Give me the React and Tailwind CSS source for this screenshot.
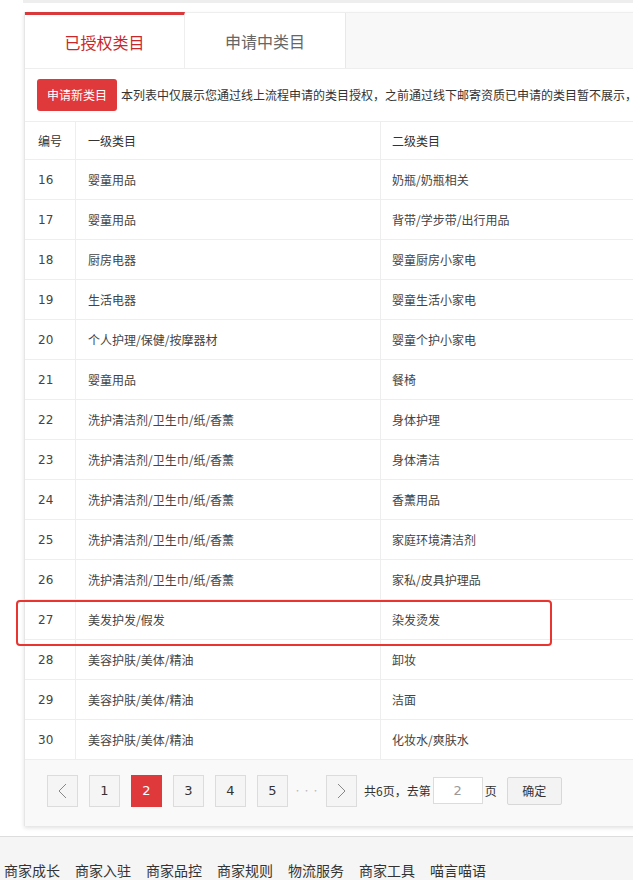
import React from 'react';

const rows = [
  [16, '婴童用品', '奶瓶/奶瓶相关'],
  [17, '婴童用品', '背带/学步带/出行用品'],
  [18, '厨房电器', '婴童厨房小家电'],
  [19, '生活电器', '婴童生活小家电'],
  [20, '个人护理/保健/按摩器材', '婴童个护小家电'],
  [21, '婴童用品', '餐椅'],
  [22, '洗护清洁剂/卫生巾/纸/香薰', '身体护理'],
  [23, '洗护清洁剂/卫生巾/纸/香薰', '身体清洁'],
  [24, '洗护清洁剂/卫生巾/纸/香薰', '香薰用品'],
  [25, '洗护清洁剂/卫生巾/纸/香薰', '家庭环境清洁剂'],
  [26, '洗护清洁剂/卫生巾/纸/香薰', '家私/皮具护理品'],
  [27, '美发护发/假发', '染发烫发'],
  [28, '美容护肤/美体/精油', '卸妆'],
  [29, '美容护肤/美体/精油', '洁面'],
  [30, '美容护肤/美体/精油', '化妆水/爽肤水'],
];

const footerLinks = ['商家成长', '商家入驻', '商家品控', '商家规则', '物流服务', '商家工具', '喵言喵语'];

const cjk = { fontFamily: '"Noto Sans CJK SC", "Liberation Sans", sans-serif' };
const num = { fontFamily: '"DejaVu Sans", "Noto Sans CJK SC", sans-serif' };

const PageBtn = ({ children, active }) => (
  <div
    className={`w-[31px] h-[32px] flex items-center justify-center text-[13px] border ${
      active ? 'bg-[#e0393b] border-[#e0393b] text-white' : 'bg-[#f5f5f5] border-[#dcdcdc] text-[#333]'
    }`}
    style={num}
  >
    {children}
  </div>
);

export default function App() {
  return (
    <div className="relative w-[633px] h-[880px] overflow-hidden bg-white" style={cjk}>
      <div className="h-[3px] ml-[23px] bg-[#eeeeee]" />

      <div className="ml-[24px] mt-[9px] w-[820px] bg-white border-l border-[#e6e6e6] shadow-[0_2px_4px_rgba(0,0,0,0.12)]">
        {/* tabs */}
        <div className="flex h-[56px] bg-[#f8f8f8] border-t border-[#eeeeee]">
          <div className="w-[160px] bg-white border-t-[3px] border-[#d9393b] border-r border-r-[#eeeeee] flex items-center justify-center text-[16px] text-[#c8282c] -mt-px">
            已授权类目
          </div>
          <div className="w-[161px] bg-white border-r border-[#e8e8e8] flex items-center justify-center text-[16px] text-[#666]">
            申请中类目
          </div>
          <div className="flex-1" />
        </div>

        {/* notice */}
        <div className="flex items-center h-[53px] pl-[12px] border-t border-[#eeeeee]">
          <div className="h-[32px] px-[10px] bg-[#e0393b] rounded-[3px] text-white text-[12px] flex items-center">
            申请新类目
          </div>
          <div className="ml-[4px] text-[12px] text-[#333] whitespace-nowrap">
            本列表中仅展示您通过线上流程申请的类目授权，之前通过线下邮寄资质已申请的类目暂不展示，
          </div>
        </div>

        {/* table */}
        <div className="border-t border-[#eeeeee] text-[12px]">
          <div className="flex h-[38px] items-center text-[#333] border-b border-[#eeeeee]">
            <div className="w-[51px] h-full flex items-center pl-[13px] border-r border-[#eeeeee]">编号</div>
            <div className="w-[305px] h-full flex items-center pl-[12px] border-r border-[#eeeeee]">一级类目</div>
            <div className="flex-1 h-full flex items-center pl-[11px]">二级类目</div>
          </div>
          {rows.map(([n, a, b]) => (
            <div key={n} className="flex h-[40px] items-center text-[#444] border-b border-[#eeeeee]">
              <div className="w-[51px] h-full flex items-center pl-[13px] border-r border-[#eeeeee]" style={num}>
                {n}
              </div>
              <div className="w-[305px] h-full flex items-center pl-[12px] border-r border-[#eeeeee]">{a}</div>
              <div className="flex-1 h-full flex items-center pl-[11px]">{b}</div>
            </div>
          ))}
        </div>

        {/* pagination */}
        <div className="h-[66px] bg-[#f9f9f9] pl-[22px] pt-[15px] flex items-start text-[13px] text-[#333]">
          <div className="flex gap-[11px]">
            <PageBtn>
              <svg width="9" height="16" viewBox="0 0 9 16" fill="none" stroke="#888" strokeWidth="1">
                <path d="M8 1L1 8l7 7" />
              </svg>
            </PageBtn>
            <PageBtn>1</PageBtn>
            <PageBtn active>2</PageBtn>
            <PageBtn>3</PageBtn>
            <PageBtn>4</PageBtn>
            <PageBtn>5</PageBtn>
          </div>
          <div className="w-[38px] h-[32px] flex items-center justify-center text-[#bbb] text-[8px] tracking-[1px]">···</div>
          <PageBtn>
            <svg width="9" height="16" viewBox="0 0 9 16" fill="none" stroke="#888" strokeWidth="1">
              <path d="M1 1l7 7-7 7" />
            </svg>
          </PageBtn>
          <div className="h-[32px] flex items-center ml-[7px] text-[12px]">共6页，去第</div>
          <div className="ml-[2px] mt-[2px] w-[50px] h-[27px] bg-white border border-[#dcdcdc] flex items-center justify-center text-[#999] text-[13px]" style={num}>
            2
          </div>
          <div className="h-[32px] flex items-center ml-[2px] text-[12px]">页</div>
          <div className="ml-[10px] mt-[2px] w-[55px] h-[28px] bg-[#f3f3f3] border border-[#d8d8d8] rounded-[2px] flex items-center justify-center text-[12px]">
            确定
          </div>
        </div>
      </div>

      {/* footer */}
      <div className="mt-[10px] border-t border-[#dddddd] bg-[#f5f5f5] h-[60px] pl-[4px] pt-[23px]">
        <div className="flex gap-[15px] text-[14px] leading-[20px] text-[#333]">
          {footerLinks.map((l) => (
            <span key={l}>{l}</span>
          ))}
        </div>
      </div>

      {/* highlight */}
      <div className="absolute left-[16px] top-[600px] w-[536px] h-[46px] border-2 border-[#e8352f] rounded-[4px]" />
    </div>
  );
}
